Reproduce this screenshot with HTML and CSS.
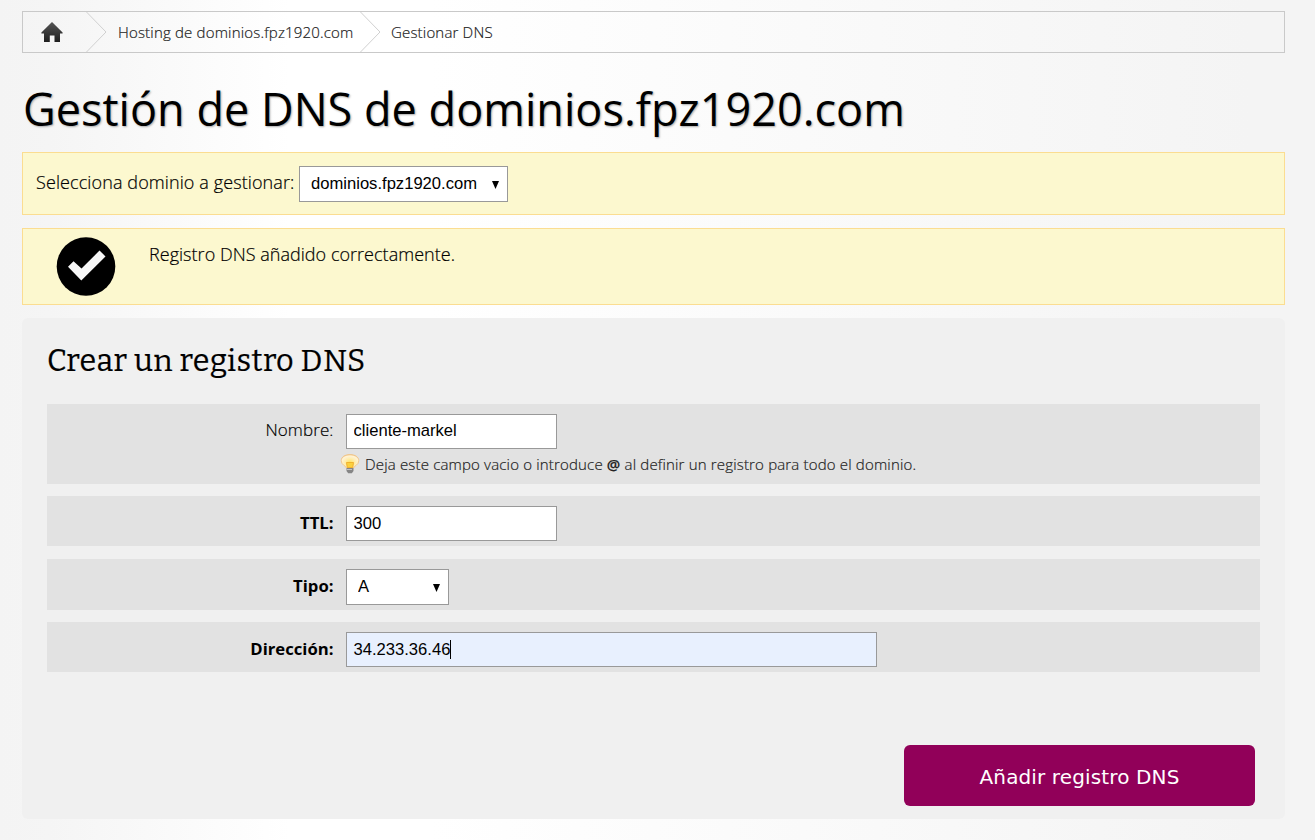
FILE: index.html
```html
<!DOCTYPE html>
<html lang="es">
<head>
<meta charset="utf-8">
<title>Gestión de DNS</title>
<link rel="stylesheet" href="styles.css">
</head>
<body>
<nav class="breadcrumb">
  <a class="home" aria-label="Inicio">
    <svg width="22" height="20" viewBox="0 0 22 20">
      <defs><linearGradient id="roof" x1="0" y1="0" x2="0" y2="1"><stop offset="0" stop-color="#555"/><stop offset="1" stop-color="#1e1e1e"/></linearGradient></defs>
      <path fill="url(#roof)" d="M11 0 21.6 10.6V11.5H19V20H13.5V13.5H8.8V20H3V11.5H.4V10.6Z"/>
    </svg>
  </a>
  <svg class="sep" width="21" height="40" viewBox="0 0 21 40"><path d="M.5 0 20 20 .5 40"/></svg>
  <a class="crumb crumb-host">Hosting de dominios.fpz1920.com</a>
  <svg class="sep" width="21" height="40" viewBox="0 0 21 40"><path d="M.5 0 20 20 .5 40"/></svg>
  <a class="crumb crumb-dns">Gestionar DNS</a>
</nav>

<h1 class="title"><span class="title-text">Gestión de DNS de dominios.fpz1920.com</span></h1>

<div class="notice picker">
  <label class="picker-label" for="domain">Selecciona dominio a gestionar:</label>
  <div class="select select-domain">
    <select id="domain"><option>dominios.fpz1920.com</option></select>
    <svg class="arrow" width="7" height="8" viewBox="0 0 7 8"><path d="M0 0H7L3.5 8Z"/></svg>
  </div>
</div>

<div class="notice success">
  <svg class="check" width="60" height="60" viewBox="0 0 60 60"><circle cx="30" cy="30.500" r="29.3"/><path fill="#f7f7f7" d="M12 30.800 17.500 25.300 25.500 32.500 43.500 14.600 49.500 20.400 25.300 44.500Z"/></svg>
  <p class="success-text">Registro DNS añadido correctamente.</p>
</div>

<form class="panel">
  <h2 class="panel-title">Crear un registro DNS</h2>
  <div class="row row-name">
    <label class="label light" for="name">Nombre:</label>
    <div class="field">
      <input id="name" class="input input-name" value="cliente-markel">
      <div class="hint">
        <svg width="20" height="20" viewBox="0 0 20 20">
          <defs><radialGradient id="glow" cx=".5" cy=".6" r=".6"><stop offset="0" stop-color="#ffe45a"/><stop offset=".5" stop-color="#ffedb0"/><stop offset=".85" stop-color="#fff3d8"/><stop offset="1" stop-color="#f6cf91"/></radialGradient></defs>
          <path fill="url(#glow)" stroke="#efbf7d" stroke-width=".8" d="M6.500 14C6.200 12 1.200 11 1.200 6.800C1.200 3.200 4.500 .6 10 .6S18.800 3.200 18.800 6.800C18.800 11 13.800 12 13.500 14Z"/>
          <path fill="#fbd13e" stroke="#eda623" stroke-width=".8" d="M6.500 8.500H13.500L12.800 13.500H7.200Z"/>
          <path fill="#858585" d="M6.500 14H13.500V17L11.800 19.300H8.200L6.500 17Z"/><path stroke="#c4c4c4" d="M7 15.500H12"/>
        </svg>
        <span class="hint-text">Deja este campo vacio o introduce <b>@</b> al definir un registro para todo el dominio.</span>
      </div>
    </div>
  </div>
  <div class="row">
    <label class="label" for="ttl">TTL:</label>
    <div class="field"><input id="ttl" class="input" value="300"></div>
  </div>
  <div class="row row-type">
    <label class="label" for="type">Tipo:</label>
    <div class="field">
      <div class="select select-type">
        <select id="type"><option>A</option></select>
        <svg class="arrow" width="7" height="8" viewBox="0 0 7 8"><path d="M0 0H7L3.500 8Z"/></svg>
      </div>
    </div>
  </div>
  <div class="row">
    <label class="label" for="address">Dirección:</label>
    <div class="field"><div class="input address" id="address" contenteditable="true">34.233.36.46<i class="caret"></i></div></div>
  </div>
  <div class="actions"><button class="submit" type="button"><span class="submit-text">Añadir registro DNS</span></button></div>
</form>
</body>
</html>
```
FILE: styles.css
```css
* { box-sizing: border-box; }
body {
  margin: 0;
  padding: 11px 30px 0 22px;
  height: 840px;
  overflow: hidden;
  font-family: "Open Sans", sans-serif;
  font-weight: 300;
  color: #000;
  background: linear-gradient(90deg, #f4f4f4 0, #f5f5f5 50px, #fff 290px, #fff 430px, #f4f4f4 1250px);
}
.breadcrumb {
  display: flex;
  align-items: center;
  height: 42px;
  border: 1px solid #c9c9c9;
  font-size: 15px;
  letter-spacing: .18px;
  color: #222;
}
.home { width: 63px; padding: 0 0 0 18px; height: 20px; }
.home svg { display: block; }
.sep { fill: none; stroke: #d0d0d0; flex: none; }
.crumb { white-space: nowrap; -webkit-text-stroke: .2px; }
.crumb-host { margin-left: 11px; width: 242px; }
.crumb-dns { margin-left: 10px; }
.title {
  margin: 0;
  height: 99px;
  padding-top: 24px;
  font-size: 45px;
  line-height: 64px;
  letter-spacing: .03px;
  font-weight: 400;
  white-space: nowrap;
  text-shadow: 1px 1px 2px #aaa;
}
.title-text { margin-left: 1px; }
.notice { border: 1px solid #fbdd91; background: #fcf8cf; font-size: 18px; -webkit-text-stroke: .2px; }
.picker { display: flex; height: 63px; padding: 13px; }
.picker-label { width: 263px; line-height: 32px; letter-spacing: .1px; white-space: nowrap; }
.select { position: relative; height: 36px; }
.select select {
  appearance: none;
  width: 100%;
  height: 36px;
  padding: 0 11px 2px;
  border: 1px solid #999;
  border-radius: 0;
  background: #fff;
  color: #000;
  font: 16.6px "Liberation Sans", Arial, sans-serif;
  -webkit-text-stroke: 0;
}
.select-domain { width: 209px; }
.select-type { width: 103px; }
.arrow { position: absolute; right: 9px; top: 15px; }
.success { display: flex; margin-top: 13px; height: 77px; padding: 7px 33px; }
.success-text { margin: 6px 0 0 33px; line-height: 25px; letter-spacing: .03px; }
.panel { margin-top: 13px; height: 501px; padding: 22px 25px 0; background: #f0f0f0; border-radius: 6px; }
.panel-title {
  margin: 0;
  height: 64px;
  font: 400 30.5px/42px Bitter, "DejaVu Serif", serif;
  letter-spacing: .42px;
  white-space: nowrap;
  -webkit-text-stroke: .2px;
}
.row { display: flex; height: 50px; margin-bottom: 13px; padding-top: 10px; background: #e2e2e2; }
.row-name { height: 80px; margin-bottom: 12px; }
.row-type { height: 51px; margin-bottom: 12px; }
.label { width: 286.5px; margin-right: 12.5px; text-align: right; font-size: 16.7px; line-height: 33px; font-weight: 700; }
.label.light { font-size: 17px; line-height: 32px; letter-spacing: .1px; font-weight: 300; -webkit-text-stroke: .2px; }
.input {
  display: block;
  width: 211px;
  height: 35px;
  padding: 0 6.5px;
  border: 1px solid #999;
  background: #fff;
  color: #000;
  font: 16.6px/33px "Liberation Sans", Arial, sans-serif;
}
.input-name { padding-bottom: 2px; }
.address { width: 531px; background: #e8f0fe; display: flex; align-items: center; }
.caret { width: 1px; height: 19px; background: #000; }
.hint { display: flex; align-items: center; height: 20px; margin: 5px 0 0 -6px; font-size: 15px; letter-spacing: .17px; color: #222; white-space: nowrap; -webkit-text-stroke: .2px; }
.hint-text { margin-left: 5px; }
.hint b { font-weight: 600; }
.actions { display: flex; justify-content: flex-end; padding: 60px 5px 0 0; }
.submit {
  width: 351px;
  height: 61px;
  padding: 2px 0 0;
  border: 0;
  border-radius: 6px;
  background: #910059;
  color: #fff;
  font: 20px "DejaVu Sans", Verdana, sans-serif;
  letter-spacing: .13px;
}
```
